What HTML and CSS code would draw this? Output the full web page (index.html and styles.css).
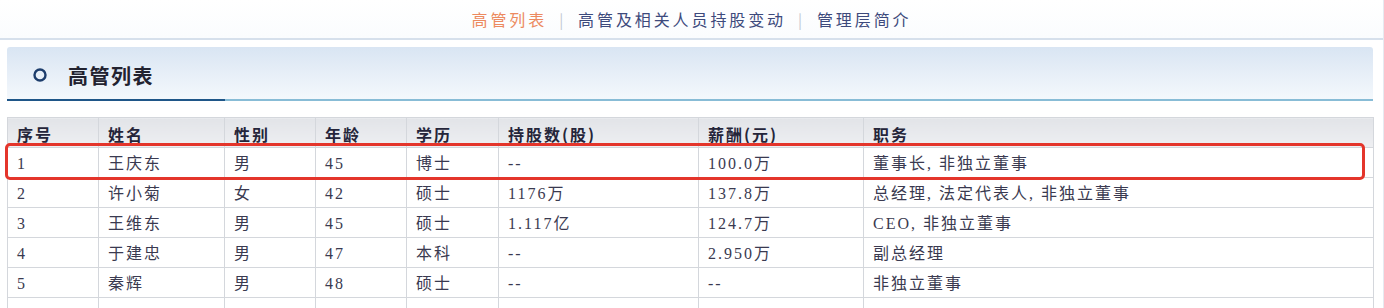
FILE: index.html
```html
<!DOCTYPE html>
<html lang="zh-CN">
<head>
<meta charset="utf-8">
<title>高管列表</title>
<link rel="stylesheet" href="styles.css">
</head>
<body>
<div class="page">
  <nav class="topnav">
    <a class="nav-item active">高管列表</a>
    <span class="sep">|</span>
    <a class="nav-item">高管及相关人员持股变动</a>
    <span class="sep">|</span>
    <a class="nav-item">管理层简介</a>
  </nav>
  <div class="content">
    <div class="section-head">
      <svg class="ring" width="16" height="16" viewBox="0 0 16 16"><circle cx="8" cy="8" r="5.5" fill="none" stroke="#1d3d6c" stroke-width="2.4"/></svg>
      <h2 class="section-title">高管列表</h2>
    </div>
    <div class="table-wrap">
      <table class="exec-table">
        <colgroup>
          <col class="c1"><col class="c2"><col class="c3"><col class="c4"><col class="c5"><col class="c6"><col class="c7"><col class="c8">
        </colgroup>
        <thead>
          <tr><th>序号</th><th>姓名</th><th>性别</th><th>年龄</th><th>学历</th><th>持股数(股)</th><th>薪酬(元)</th><th>职务</th></tr>
        </thead>
        <tbody>
          <tr><td>1</td><td>王庆东</td><td>男</td><td>45</td><td>博士</td><td>--</td><td>100.0万</td><td>董事长, 非独立董事</td></tr>
          <tr><td>2</td><td>许小菊</td><td>女</td><td>42</td><td>硕士</td><td>1176万</td><td>137.8万</td><td>总经理, 法定代表人, 非独立董事</td></tr>
          <tr><td>3</td><td>王维东</td><td>男</td><td>45</td><td>硕士</td><td>1.117亿</td><td>124.7万</td><td>CEO, 非独立董事</td></tr>
          <tr><td>4</td><td>于建忠</td><td>男</td><td>47</td><td>本科</td><td>--</td><td>2.950万</td><td>副总经理</td></tr>
          <tr><td>5</td><td>秦辉</td><td>男</td><td>48</td><td>硕士</td><td>--</td><td>--</td><td>非独立董事</td></tr>
          <tr class="empty"><td></td><td></td><td></td><td></td><td></td><td></td><td></td><td></td></tr>
        </tbody>
      </table>
      <div class="highlight"></div>
    </div>
  </div>
</div>
</body>
</html>
```

FILE: styles.css
```css
html, body {
  margin: 0;
  padding: 0;
  background: #ffffff;
  overflow: hidden;
}
.page {
  width: 1384px;
  height: 308px;
  overflow: hidden;
  font-family: "Liberation Serif", "Noto Sans CJK SC", serif;
  color: #3a3a50;
  box-sizing: border-box;
  border-right: 1px solid #e6eaf0;
}
.topnav {
  height: 38px;
  border-bottom: 2px solid #d6e0ec;
  background: linear-gradient(#ffffff, #fafcfe);
  display: flex;
  align-items: center;
  justify-content: center;
  gap: 12px;
  padding-left: 0;
  font-family: "Noto Sans CJK SC", sans-serif;
  font-size: 16px;
  letter-spacing: 2.9px;
}
.nav-item {
  color: #3d4a7c;
}
.nav-item.active {
  color: #ec8a60;
}
.sep {
  color: #c2c8d2;
  font-size: 15px;
}
.content {
  padding: 7px 10px 0 7px;
}
.section-head {
  height: 52px;
  border-radius: 3px 3px 0 0;
  background: linear-gradient(#d9e5f3, #f4f8fc);
  border-bottom: 2px solid #88bcd6;
  display: flex;
  align-items: center;
  padding-left: 25px;
  gap: 20px;
  position: relative;
}
.section-head::after {
  content: "";
  position: absolute;
  left: 0;
  bottom: -2px;
  width: 218px;
  height: 2px;
  background: #1f5688;
}
.ring {
  margin-top: 4px;
}
.section-title {
  margin: 4px 0 0 0;
  font-family: "Noto Sans CJK SC", sans-serif;
  font-size: 20px;
  font-weight: 700;
  letter-spacing: 1.5px;
  color: #222230;
}
.table-wrap {
  margin-top: 16px;
  position: relative;
}
.exec-table {
  width: 1366px;
  border-collapse: collapse;
  table-layout: fixed;
  font-size: 16px;
}
.c1 { width: 91px; }
.c2 { width: 126px; }
.c3 { width: 91px; }
.c4 { width: 91px; }
.c5 { width: 92px; }
.c6 { width: 200px; }
.c7 { width: 165px; }
.c8 { width: 510px; }
.exec-table th,
.exec-table td {
  border: 1px solid #d4d7dc;
  height: 26px;
  line-height: 20px;
  padding: 3px 0 0 9px;
  vertical-align: middle;
  text-align: left;
  white-space: nowrap;
  letter-spacing: 2px;
}
.exec-table th {
  background: linear-gradient(#e2e4e8, #eeeff2);
  font-family: "Noto Sans CJK SC", sans-serif;
  font-weight: 700;
  font-size: 16px;
  color: #25253a;
}
.exec-table td {
  background: #ffffff;
}
.highlight {
  position: absolute;
  left: -2px;
  top: 26px;
  width: 1354px;
  height: 31px;
  border: 3px solid #e4352b;
  border-radius: 5px;
  pointer-events: none;
}
```
